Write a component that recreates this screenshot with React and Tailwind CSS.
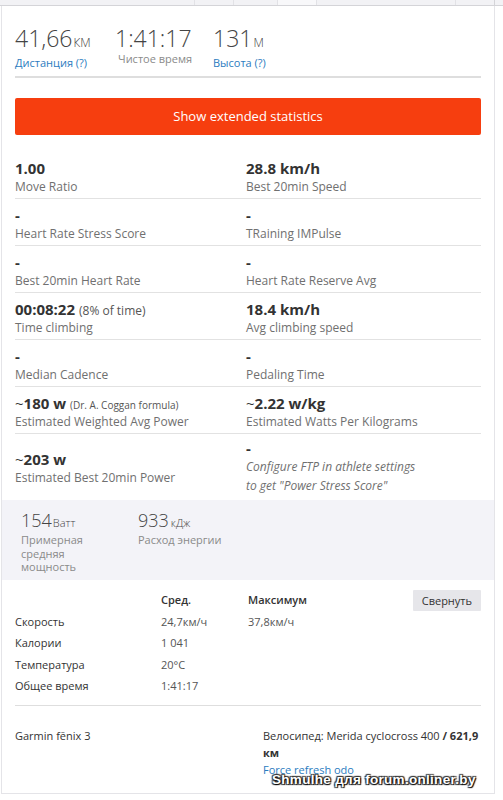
import React from 'react'

const FONT = { fontFamily: '"Open Sans", "Noto Sans", sans-serif' }

const STATS = [
  [
    { value: '1.00', label: 'Move Ratio' },
    { value: '28.8 km/h', label: 'Best 20min Speed' },
  ],
  [
    { value: '-', label: 'Heart Rate Stress Score' },
    { value: '-', label: 'TRaining IMPulse' },
  ],
  [
    { value: '-', label: 'Best 20min Heart Rate' },
    { value: '-', label: 'Heart Rate Reserve Avg' },
  ],
  [
    { value: '00:08:22', note: '(8% of time)', label: 'Time climbing' },
    { value: '18.4 km/h', label: 'Avg climbing speed' },
  ],
  [
    { value: '-', label: 'Median Cadence' },
    { value: '-', label: 'Pedaling Time' },
  ],
  [
    { value: '180 w', tilde: true, note: '(Dr. A. Coggan formula)', small: true, label: 'Estimated Weighted Avg Power' },
    { value: '2.22 w/kg', tilde: true, label: 'Estimated Watts Per Kilograms' },
  ],
]

const ROWS = [
  ['Скорость', '24,7км/ч', '37,8км/ч'],
  ['Калории', '1 041', ''],
  ['Температура', '20°C', ''],
  ['Общее время', '1:41:17', ''],
]

function Stat({ s }) {
  return (
    <div>
      <div className="text-[15px] font-bold text-[#333] leading-[20px] h-[20px]">
        {s.tilde && <span className="font-normal">~</span>}
        {s.value}
        {s.note && (
          <span className={`font-normal text-[#555] ml-1 ${s.small ? 'text-[10px]' : 'text-[12px]'}`}>{s.note}</span>
        )}
      </div>
      <div className="text-[12px] text-[#707070] leading-[18px]">{s.label}</div>
    </div>
  )
}

export default function App() {
  return (
    <div className="bg-white w-[503px] h-[800px] relative" style={FONT}>
      {/* tab strip */}
      <div className="flex h-[6px] bg-[#f2f2f5] border-b border-[#d4d4d8]">
        <div className="w-[195px] border-r border-[#e2e2e6]" />
        <div className="w-[39px] border-r border-[#e2e2e6]" />
        <div className="w-[44px] border-r border-[#e2e2e6]" />
        <div className="w-[39px] border-r border-[#e2e2e6] bg-[#f8f8fa]" />
        <div className="w-[139px] border-r border-[#e2e2e6]" />
        <div className="w-[39px] border-r border-[#d4d4d8]" />
      </div>

      <div className="ml-[1px] w-[494px] border-l border-r border-b border-[#e4e4e8] h-[788px] flex flex-col">
        {/* summary */}
        <div className="px-[13px] pt-[19px]">
          <div className="flex pb-[6px] border-b-2 border-[#dedede]">
            <div className="w-[100px]">
              <div className="text-[23px] font-light text-[#444] leading-[27px]">
                41,66<span className="text-[12px] ml-[1px]">КМ</span>
              </div>
              <div className="text-[11px] text-[#2b7cc0] leading-[14px]">Дистанция (?)</div>
            </div>
            <div className="w-[98px]">
              <div className="text-[23px] font-light text-[#444] leading-[27px]">1:41:17</div>
              <div className="text-[11px] text-[#8a8a8a] leading-[14px] ml-[3px]">Чистое время</div>
            </div>
            <div>
              <div className="text-[23px] font-light text-[#444] leading-[27px]">
                131<span className="text-[12px] ml-[1px]">М</span>
              </div>
              <div className="text-[11px] text-[#2b7cc0] leading-[14px]">Высота (?)</div>
            </div>
          </div>

          <button className="mt-[20px] w-full h-[37px] bg-[#f63e0f] text-white text-[13px] rounded-[2px]">
            Show extended statistics
          </button>

          {/* stats grid */}
          <div className="mt-[17px]">
            {STATS.map((row, i) => (
              <div key={i} className="grid grid-cols-[231px_1fr] border-b border-[#e2e2e2] pt-[6px] pb-[7px] h-[47px]">
                <Stat s={row[0]} />
                <Stat s={row[1]} />
              </div>
            ))}
            <div className="grid grid-cols-[231px_1fr] pt-[5px] pb-[5px]">
              <div className="pt-[10px]">
                <Stat s={{ value: '203 w', tilde: true, label: 'Estimated Best 20min Power' }} />
              </div>
              <div>
                <div className="text-[15px] font-bold text-[#333] leading-[18px]">-</div>
                <div className="text-[12px] italic text-[#707070] leading-[19px]">
                  Configure FTP in athlete settings
                  <br />
                  to get "Power Stress Score"
                </div>
              </div>
            </div>
          </div>
        </div>

        {/* gray block */}
        <div className="bg-[#f3f3f8] h-[80px] flex gap-[20px] pl-[19px] pt-[10px]">
          <div className="w-[97px]">
            <div className="text-[18px] font-light text-[#444] leading-[21px]">
              154<span className="text-[11px] ml-[1px]">Ватт</span>
            </div>
            <div className="text-[11px] text-[#8a8a8a] leading-[13.5px] w-[80px]">Примерная средняя мощность</div>
          </div>
          <div>
            <div className="text-[18px] font-light text-[#444] leading-[21px]">
              933<span className="text-[11px] ml-[2px]">кДж</span>
            </div>
            <div className="text-[11px] text-[#8a8a8a] leading-[13.5px]">Расход энергии</div>
          </div>
        </div>

        {/* details table */}
        <div className="px-[13px] pt-[9px]">
          <div className="border-b border-[#dedede] pb-[8px]">
            <div className="flex items-center h-[22px]">
              <div className="w-[146px]" />
              <div className="w-[87px] text-[11px] font-semibold text-[#333]">Сред.</div>
              <div className="flex-1 text-[11px] font-semibold text-[#333]">Максимум</div>
              <div className="bg-[#e6e6ea] text-[11px] text-[#333] px-[9px] h-[21px] leading-[21px] rounded-[1px]">
                Свернуть
              </div>
            </div>
            {ROWS.map(r => (
              <div key={r[0]} className="flex items-center h-[21.5px] text-[11px] text-[#333]">
                <div className="w-[146px]">{r[0]}</div>
                <div className="w-[87px] text-[#555]">{r[1]}</div>
                <div className="text-[#555]">{r[2]}</div>
              </div>
            ))}
          </div>

          {/* footer */}
          <div className="flex pt-[21px]">
            <div className="w-[248px] text-[11px] text-[#333] leading-[17px]">Garmin fēnix 3</div>
            <div className="flex-1 text-[11px] text-[#333] leading-[17px]">
              Велосипед: Merida cyclocross 400 <b>/ 621,9 км</b>
              <div className="text-[#2b7cc0] leading-[17px]">Force refresh odo</div>
            </div>
          </div>
        </div>
      </div>

      <div
        className="absolute left-[272px] top-[770px] text-[13.5px] font-bold text-white tracking-[0.3px]"
        style={{ fontFamily: '"Liberation Sans", Arial, sans-serif', textShadow: '1px 1px 1px #000, -1px -1px 1px #333, 1px -1px 1px #333, -1px 1px 1px #333' }}
      >
        Shmulhe для forum.onliner.by
      </div>
    </div>
  )
}
